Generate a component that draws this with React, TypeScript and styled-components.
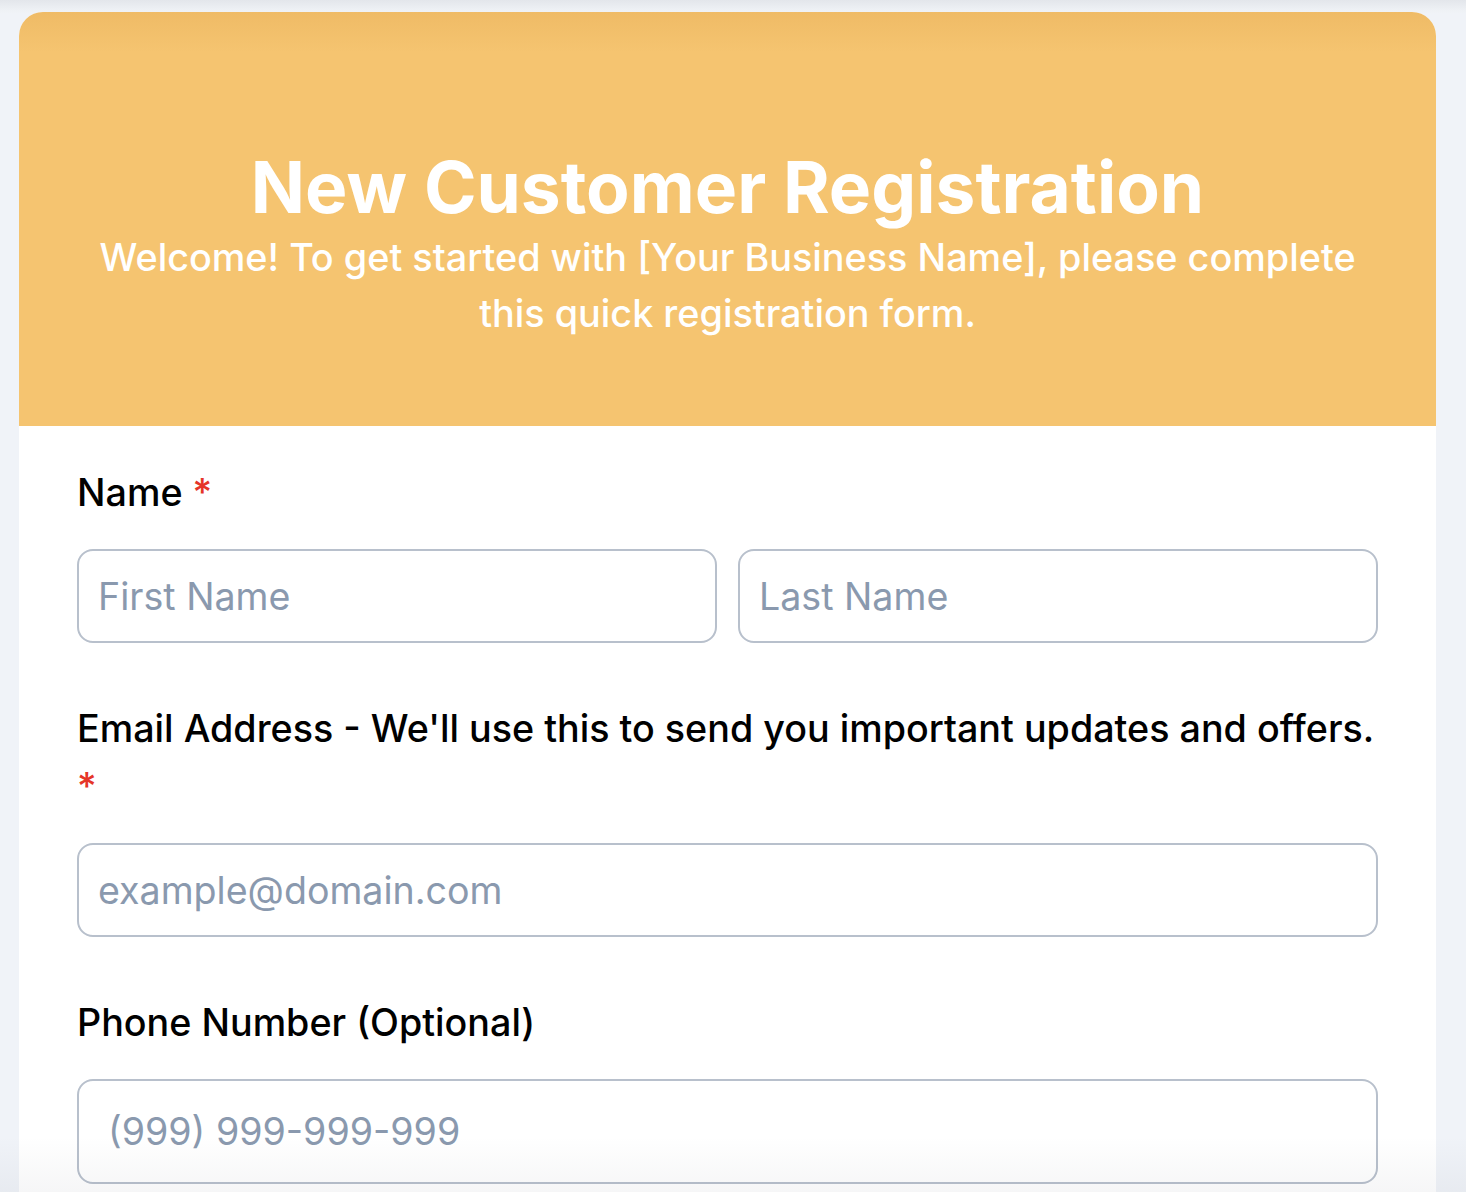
import React from "react";
import styled, { createGlobalStyle } from "styled-components";

const Global = createGlobalStyle`
  html, body { margin: 0; padding: 0; }
  body {
    background: #f0f3f8;
    font-family: Inter, "Noto Sans", sans-serif;
    -webkit-font-smoothing: antialiased;
  }
`;

const Page = styled.div`
  position: relative;
  height: 1192px;
  overflow: hidden;
  padding: 12px 30px 0 19px;
  box-sizing: border-box;
  background: linear-gradient(#e3e6eb 0px, #eef1f5 10px, #f0f3f8 14px);
`;

const BottomFade = styled.div`
  position: absolute;
  left: 0;
  right: 0;
  bottom: 0;
  height: 56px;
  pointer-events: none;
  background: linear-gradient(rgba(40, 50, 70, 0), rgba(40, 50, 70, 0.045));
`;

const Card = styled.div`
  background: #ffffff;
  border-radius: 24px 24px 0 0;
  overflow: hidden;
  min-height: 1180px;
`;

const Header = styled.header`
  height: 414px;
  box-sizing: border-box;
  background: linear-gradient(#efbb66 0px, #f5c470 40px);
  color: #ffffff;
  display: flex;
  flex-direction: column;
  align-items: center;
  text-align: center;
  padding: 133px 60px 0;
`;

const Title = styled.h1`
  margin: 0;
  font-size: 71.2px;
  font-weight: 700;
  line-height: 84px;
`;

const Subtitle = styled.p`
  margin: 0;
  font-size: 37.8px;
  font-weight: 500;
  line-height: 56px;
  max-width: 1295px;
`;

const Body = styled.div`
  padding: 37px 58px 0;
  display: flex;
  flex-direction: column;
  gap: 56px;
`;

const Field = styled.div`
  display: flex;
  flex-direction: column;
  gap: 28px;
`;

const Label = styled.label`
  font-size: 37.7px;
  font-weight: 500;
  line-height: 58px;
  color: #000000;
`;

const Req = styled.span`
  color: #e53528;
`;

const Row = styled.div`
  display: grid;
  grid-template-columns: 1fr 1fr;
  gap: 21px;
`;

const Input = styled.input<{ $tall?: boolean }>`
  box-sizing: border-box;
  width: 100%;
  height: ${(p) => (p.$tall ? "105px" : "94px")};
  border: 2px solid #b8c0cc;
  border-radius: 16px;
  padding: 0 ${(p) => (p.$tall ? "29px" : "19px")};
  font-family: Inter, "Noto Sans", sans-serif;
  font-size: 37.6px;
  color: #1a202c;
  background: #ffffff;
  outline: none;
  &::placeholder {
    color: #8a99ae;
  }
`;

export default function App() {
  return (
    <>
      <Global />
      <Page>
        <Card>
          <Header>
            <Title>New Customer Registration</Title>
            <Subtitle>
              Welcome! To get started with [Your Business Name], please complete this quick
              registration form.
            </Subtitle>
          </Header>
          <Body>
            <Field>
              <Label>
                Name <Req>*</Req>
              </Label>
              <Row>
                <Input placeholder="First Name" />
                <Input placeholder="Last Name" />
              </Row>
            </Field>
            <Field>
              <Label>
                Email Address - We'll use this to send you important updates and offers.{" "}
                <Req>*</Req>
              </Label>
              <Input placeholder="example@domain.com" />
            </Field>
            <Field>
              <Label>Phone Number (Optional)</Label>
              <Input $tall placeholder="(999) 999-999-999" />
            </Field>
          </Body>
        </Card>
        <BottomFade />
      </Page>
    </>
  );
}
